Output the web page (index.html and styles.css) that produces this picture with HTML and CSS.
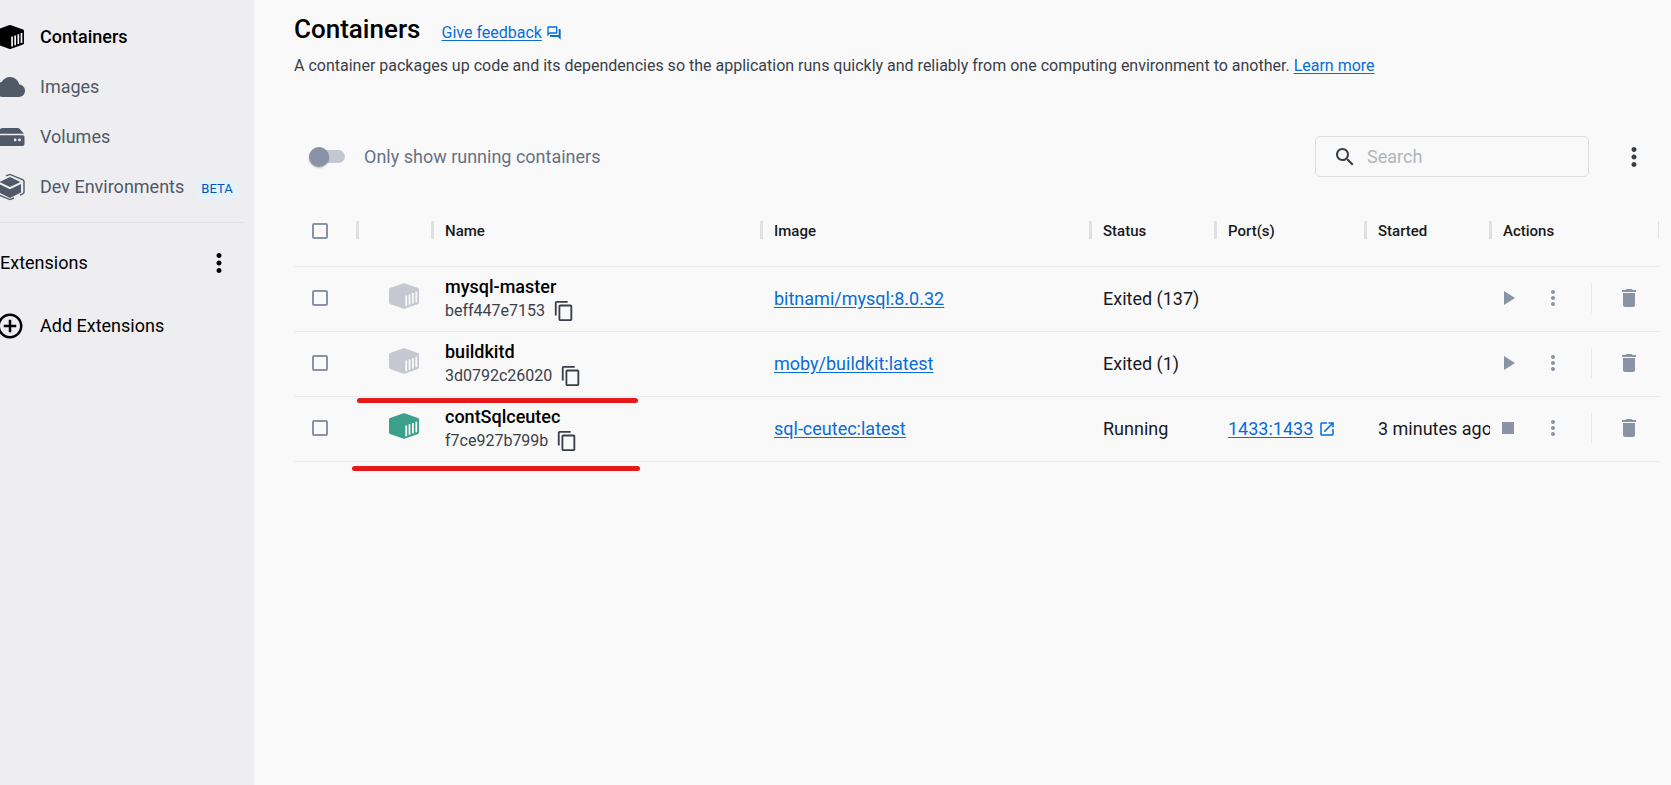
FILE: index.html
```html
<!DOCTYPE html>
<html lang="en">
<head>
<meta charset="utf-8">
<title>Containers</title>
<link rel="stylesheet" href="styles.css">
</head>
<body>
<svg class="defs" aria-hidden="true">
  <symbol id="container" viewBox="0 0 30 26">
    <path fill="currentColor" d="M13.8.4q1.200-.5 2.400 0L29 5q1 .4 1 1.400v13.200q0 1-1 1.400l-12.800 4.600q-1.200.5-2.400 0L1 21q-1-.4-1-1.400V6.400Q0 5.400 1 5z"/>
    <path class="ribs" d="M17.200 12.500v10.700M20.500 11.300v10.500M23.900 10.100v10.400M27.300 8.800v10.500"/>
  </symbol>
  <symbol id="dots" viewBox="0 0 24 24"><path fill="currentColor" d="M12 8c1.100 0 2-.9 2-2s-.9-2-2-2-2 .9-2 2 .9 2 2 2zm0 2c-1.100 0-2 .9-2 2s.9 2 2 2 2-.9 2-2-.9-2-2-2zm0 6c-1.100 0-2 .9-2 2s.9 2 2 2 2-.9 2-2-.9-2-2-2z"/></symbol>
  <symbol id="copy" viewBox="0 0 24 24"><path fill="currentColor" d="M16 1H4c-1.100 0-2 .9-2 2v14h2V3h12V1zm3 4H8c-1.100 0-2 .9-2 2v14c0 1.100.9 2 2 2h11c1.100 0 2-.9 2-2V7c0-1.100-.9-2-2-2zm0 16H8V7h11v14z"/></symbol>
  <symbol id="play" viewBox="0 0 24 24"><path fill="currentColor" d="M8 5v14l11-7z"/></symbol>
  <symbol id="stop" viewBox="0 0 24 24"><path fill="currentColor" d="M6 6h12v12H6z"/></symbol>
  <symbol id="trash" viewBox="0 0 24 24"><path fill="currentColor" d="M6 19c0 1.100.9 2 2 2h8c1.100 0 2-.9 2-2V7H6v12zM19 4h-3.500l-1-1h-5l-1 1H5v2h14V4z"/></symbol>
</svg>
<div class="app">
  <aside class="sidebar">
    <nav class="nav">
      <a class="nav-item active" href="#"><svg class="nav-icon nav-container"><use href="#container"/></svg>Containers</a>
      <a class="nav-item" href="#"><svg class="nav-icon" viewBox="0 0 24 24"><path fill="currentColor" d="M19.350 10.040C18.670 6.590 15.640 4 12 4 9.110 4 6.600 5.640 5.350 8.040 2.340 8.360 0 10.910 0 14c0 3.310 2.690 6 6 6h13c2.760 0 5-2.240 5-5 0-2.640-2.050-4.780-4.650-4.960z"/></svg>Images</a>
      <a class="nav-item" href="#"><svg class="nav-icon" viewBox="0 0 30 30"><path fill="currentColor" d="M7.500 6h15q1 0 1.800.6L29 11.700H1l4.700-5.100Q6.500 6 7.500 6zM2 13.200h26q1.500 0 1.500 1.500V22q0 2-2 2h-25q-2 0-2-2v-7.300Q.5 13.200 2 13.200z"/><circle class="led" cx="20.200" cy="18" r="1.400"/><circle class="led" cx="24.500" cy="18" r="1.400"/></svg>Volumes</a>
      <a class="nav-item" href="#"><svg class="nav-icon" viewBox="0 0 30 30"><path fill="currentColor" d="M15 5l10.500 5L15 15 4.500 10zM4 12l11 5.200L26 12v8.500L15 26 4 20.500z"/><path fill="none" stroke="currentColor" stroke-width="1.400" d="M11 3.800L15 2.400l13 5.400a2 2 0 0 1 1 1.500v11a2 2 0 0 1-1 1.400l-3 1.400M19 26l-4 1.600-13-5.400a2 2 0 0 1-1-1.500v-11a2 2 0 0 1 1-1.400l3-1.400"/></svg>Dev Environments<span class="badge">BETA</span></a>
    </nav>
    <div class="ext-head">
      <span>Extensions</span>
      <button class="icon-btn" aria-label="Extension options"><svg class="i30"><use href="#dots"/></svg></button>
    </div>
    <a class="nav-item add" href="#"><svg class="nav-icon" viewBox="0 0 24 24"><path fill="currentColor" d="M13 7h-2v4H7v2h4v4h2v-4h4v-2h-4V7zm-1-5C6.480 2 2 6.480 2 12s4.480 10 10 10 10-4.480 10-10S17.520 2 12 2zm0 18c-4.410 0-8-3.590-8-8s3.590-8 8-8 8 3.590 8 8-3.590 8-8 8z"/></svg>Add Extensions</a>
  </aside>
  <main class="main">
    <header class="title-row">
      <h1>Containers</h1>
      <a class="feedback" href="#"><span>Give feedback</span><svg class="i16" viewBox="0 0 24 24"><path fill="currentColor" d="M15 4v7H5.170L4 12.170V4h11m1-2H3c-.55 0-1 .45-1 1v14l4-4h10c.55 0 1-.45 1-1V3c0-.55-.45-1-1-1zm5 4h-2v9H6v2c0 .55.45 1 1 1h11l4 4V7c0-.55-.45-1-1-1z"/></svg></a>
    </header>
    <p class="intro">A container packages up code and its dependencies so the application runs quickly and reliably from one computing environment to another. <a href="#">Learn more</a></p>
    <div class="toolbar">
      <label class="switch"><input type="checkbox" role="switch"><span>Only show running containers</span></label>
      <div class="tools">
        <label class="search"><svg class="i24" viewBox="0 0 24 24"><path fill="currentColor" d="M15.500 14h-.79l-.28-.27C15.410 12.590 16 11.110 16 9.500 16 5.910 13.090 3 9.500 3S3 5.910 3 9.500 5.910 16 9.500 16c1.610 0 3.090-.59 4.230-1.570l.27.28v.79l5 4.990L20.490 19l-4.990-5zm-6 0C7.010 14 5 11.990 5 9.500S7.010 5 9.500 5 14 7.010 14 9.500 11.990 14 9.500 14z"/></svg><input type="text" placeholder="Search" aria-label="Search"></label>
        <button class="icon-btn" aria-label="More options"><svg class="i30"><use href="#dots"/></svg></button>
      </div>
    </div>
    <div class="list">
      <table>
        <colgroup><col class="c-check"><col class="c-icon"><col><col><col class="c-status"><col class="c-port"><col class="c-started"><col class="c-actions"></colgroup>
        <thead>
          <tr><th class="check"><input type="checkbox" aria-label="Select all"></th><th></th><th>Name</th><th>Image</th><th>Status</th><th>Port(s)</th><th>Started</th><th>Actions</th></tr>
        </thead>
        <tbody>
          <tr>
            <td class="check"><input type="checkbox" aria-label="Select mysql-master"></td>
            <td class="state"><svg class="box"><use href="#container"/></svg></td>
            <td><div class="name">mysql-master</div><div class="id">beff447e7153<button class="icon-btn" aria-label="Copy id"><svg class="i22"><use href="#copy"/></svg></button></div></td>
            <td><a href="#">bitnami/mysql:8.0.32</a></td>
            <td>Exited (137)</td><td></td><td></td>
            <td class="actions"><div><button class="icon-btn" aria-label="Start"><svg class="i24"><use href="#play"/></svg></button><button class="icon-btn" aria-label="More"><svg class="i24"><use href="#dots"/></svg></button><button class="icon-btn delete" aria-label="Delete"><svg class="i24"><use href="#trash"/></svg></button></div></td>
          </tr>
          <tr>
            <td class="check"><input type="checkbox" aria-label="Select buildkitd"></td>
            <td class="state"><svg class="box"><use href="#container"/></svg></td>
            <td><div class="name">buildkitd</div><div class="id">3d0792c26020<button class="icon-btn" aria-label="Copy id"><svg class="i22"><use href="#copy"/></svg></button></div></td>
            <td><a href="#">moby/buildkit:latest</a></td>
            <td>Exited (1)</td><td></td><td></td>
            <td class="actions"><div><button class="icon-btn" aria-label="Start"><svg class="i24"><use href="#play"/></svg></button><button class="icon-btn" aria-label="More"><svg class="i24"><use href="#dots"/></svg></button><button class="icon-btn delete" aria-label="Delete"><svg class="i24"><use href="#trash"/></svg></button></div></td>
          </tr>
          <tr>
            <td class="check"><input type="checkbox" aria-label="Select contSqlceutec"></td>
            <td class="state running"><svg class="box"><use href="#container"/></svg></td>
            <td><div class="name">contSqlceutec</div><div class="id">f7ce927b799b<button class="icon-btn" aria-label="Copy id"><svg class="i22"><use href="#copy"/></svg></button></div></td>
            <td><a href="#">sql-ceutec:latest</a></td>
            <td>Running</td>
            <td><a class="port" href="#"><span>1433:1433</span><svg class="i18" viewBox="0 0 24 24"><path fill="currentColor" d="M19 19H5V5h7V3H5c-1.110 0-2 .9-2 2v14c0 1.100.89 2 2 2h14c1.100 0 2-.9 2-2v-7h-2v7zM14 3v2h3.590l-9.830 9.830 1.410 1.410L19 6.410V10h2V3h-7z"/></svg></a></td>
            <td class="started">3 minutes ago</td>
            <td class="actions"><div><button class="icon-btn" aria-label="Stop"><svg class="i24"><use href="#stop"/></svg></button><button class="icon-btn" aria-label="More"><svg class="i24"><use href="#dots"/></svg></button><button class="icon-btn delete" aria-label="Delete"><svg class="i24"><use href="#trash"/></svg></button></div></td>
          </tr>
        </tbody>
      </table>
      <span class="mark mark-top"></span>
      <span class="mark mark-bottom"></span>
    </div>
  </main>
</div>
</body>
</html>
```

FILE: styles.css
```css
* { box-sizing: border-box; }
body { margin: 0; font: 18px/24px Roboto, "Liberation Sans", sans-serif; color: #17191e; background: #f9f9fa; }
svg { display: block; flex: none; }
button, input { font: inherit; }
a { color: #086dd7; text-underline-offset: 2px; }
.defs { position: absolute; width: 0; height: 0; }
.ribs { fill: none; stroke: #f9f9fa; stroke-width: 1.8; }
.icon-btn { display: flex; padding: 0; border: 0; background: none; color: inherit; cursor: pointer; }
.i16 { width: 16px; height: 16px; }
.i18 { width: 18px; height: 18px; }
.i22 { width: 22px; height: 22px; }
.i24 { width: 24px; height: 24px; }
.i30 { width: 30px; height: 30px; }

.app { display: flex; min-height: 100vh; }
.sidebar { width: 254px; flex: none; overflow: hidden; padding-top: 12px; background: #eeeef1; }
.nav { margin-right: 10px; padding-bottom: 10px; border-bottom: 1px solid #e1e2e6; }
.nav-item { display: flex; align-items: center; gap: 15px; height: 50px; margin-left: -5px; color: #505968; text-decoration: none; white-space: nowrap; }
.nav-item.active { color: #000; font-weight: 500; }
.nav-icon { width: 30px; height: 30px; }
.nav-container { padding: 2px 1px; }
.nav-container .ribs { stroke: #eeeef1; }
.led { fill: #eeeef1; }
.badge { margin: 3px 0 0 -3px; padding: 0 5px; border-radius: 5px; background: #e5f2fc; color: #0055bb; font-size: 13px; line-height: 20px; }
.ext-head { display: flex; align-items: center; justify-content: space-between; height: 80px; padding-right: 20px; color: #000; }
.nav-item.add { height: 45px; color: #000; }

.main { flex: 1; min-width: 0; padding: 12px 12px 0 40px; }
.title-row { display: flex; align-items: baseline; gap: 21px; }
h1 { margin: 0; font-size: 26px; line-height: 34px; font-weight: 500; color: #000; }
.feedback { display: flex; align-items: center; gap: 4px; font-size: 16px; text-decoration: none; }
.feedback span, .port span { text-decoration: underline; }
.intro { margin: 8px 0 0; font-size: 16px; line-height: 24px; color: #393f49; }
.toolbar { display: flex; align-items: center; justify-content: space-between; margin-top: 58px; }
.switch { display: flex; align-items: center; gap: 19px; margin-left: 15px; color: #677285; }
.switch input { appearance: none; display: flex; align-items: center; width: 36px; height: 13px; margin: 0; border-radius: 7px; background: #c4c8d1; }
.switch input::before { content: ""; width: 20px; height: 20px; border-radius: 50%; background: #8993a5; box-shadow: 0 1px 2px rgba(0, 0, 0, .25); }
.tools { display: flex; align-items: center; gap: 30px; padding-right: 10px; }
.search { display: flex; align-items: center; gap: 10px; width: 274px; height: 41px; padding: 0 17px; border: 1px solid #dcdee2; border-radius: 5px; color: #393f49; }
.search input { flex: 1; min-width: 0; padding: 0; border: 0; outline: 0; background: none; }
.search input::placeholder { color: #b1b5bc; opacity: 1; }
.tools .icon-btn { color: #393f49; }

.list { position: relative; margin-top: 18px; }
table { width: 100%; table-layout: fixed; border-collapse: collapse; }
.c-check { width: 63px; }
.c-icon { width: 75px; }
.c-status, .c-started { width: 125px; }
.c-port { width: 150px; }
.c-actions { width: 169px; }
th, td { padding: 0 0 0 13px; text-align: left; white-space: nowrap; border-bottom: 1px solid #ebecee; }
th { position: relative; height: 71px; padding-top: 2px; font-size: 15px; font-weight: 500; }
th::after { content: ""; position: absolute; top: 26px; right: -2px; width: 3px; height: 18px; background: #e0e0e0; }
th:last-child::after { right: 0; width: 1px; }
td { height: 65px; }
.check { padding-left: 18px; }
.check input { appearance: none; display: block; width: 16px; height: 16px; margin: 0; border: 2px solid #8993a5; border-radius: 2px; }
td.check { padding-bottom: 2px; }
.state { padding: 0 0 6px 32px; color: #c4c8d1; }
.state.running { color: #3da08d; }
.box { width: 30px; height: 26px; }
.name { color: #000; font-weight: 500; line-height: 24px; }
.id { display: flex; align-items: center; gap: 8px; font-size: 16px; line-height: 24px; color: #393f49; }
.started { overflow: hidden; text-overflow: clip; }
.port { display: flex; align-items: center; gap: 5px; text-decoration: none; }
.actions { padding: 0 0 2px 6px; color: #8993a5; }
.actions div { display: flex; align-items: center; gap: 21px; height: 30px; }
.delete { align-items: center; height: 30px; margin-left: 5px; padding-left: 25px; border-left: 1px solid #e8e9ec; }
.mark { position: absolute; height: 5px; border-radius: 3px; background: #e61919; }
.mark-top { top: 203px; left: 63px; width: 281px; }
.mark-bottom { top: 271px; left: 58px; width: 288px; }
```
